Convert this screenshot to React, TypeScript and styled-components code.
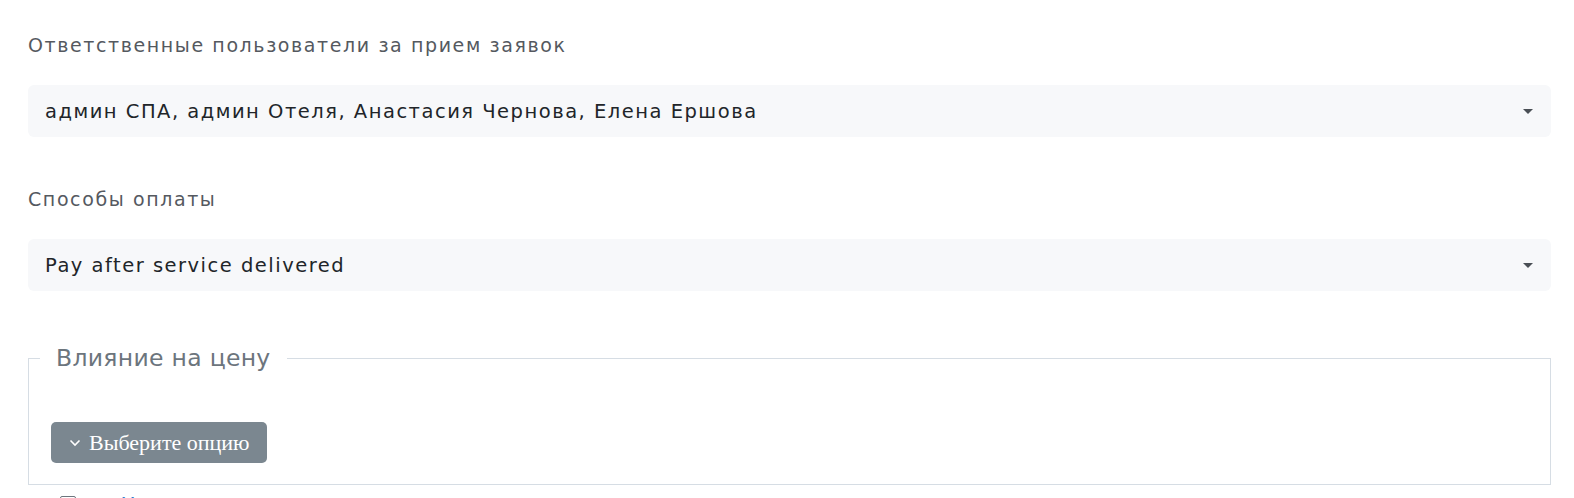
import React from "react";
import styled, { createGlobalStyle } from "styled-components";

const Global = createGlobalStyle`
  html, body { margin: 0; padding: 0; background: #fff; }
  body { font-family: "DejaVu Sans", "Noto Sans", sans-serif; overflow: hidden; }
`;

const Page = styled.div`
  padding: 30px 23px 0 28px;
  display: flex;
  flex-direction: column;
`;

const Group = styled.div<{ $mb: number }>`
  display: flex;
  flex-direction: column;
  gap: 25px;
  margin-bottom: ${(p) => p.$mb}px;
`;

const Label = styled.div`
  font-size: 19px;
  line-height: 30px;
  color: #55595f;
  letter-spacing: 1.6px;
`;

const Select = styled.div`
  height: 52px;
  box-sizing: border-box;
  background: #f7f8fa;
  border-radius: 6px;
  display: flex;
  align-items: center;
  padding: 0 18px 0 17px;
  font-size: 19.5px;
  color: #212529;
  letter-spacing: 1.5px;
`;

const SelectText = styled.span`
  flex: 1;
`;

const Caret = styled.span`
  width: 0;
  height: 0;
  border-left: 5px solid transparent;
  border-right: 5px solid transparent;
  border-top: 5px solid #4a4f55;
`;

const Fieldset = styled.fieldset`
  margin: 3px 0 0;
  border: 1px solid #d6dde4;
  padding: 0 22px 21px;
  min-width: 0;
`;

const Legend = styled.legend`
  margin-left: -11px;
  padding: 0 16px;
  font-size: 23.5px;
  line-height: 36px;
  color: #6c757d;
  letter-spacing: 0.3px;
`;

const OptionButton = styled.button`
  margin-top: 46px;
  height: 41px;
  width: 216px;
  border: none;
  border-radius: 5px;
  background: #7b8790;
  color: #fff;
  font-family: "Liberation Serif", serif;
  font-size: 22px;
  display: flex;
  align-items: center;
  padding: 0 0 0 18px;
  gap: 8px;
`;

const CheckRow = styled.div`
  display: flex;
  align-items: flex-start;
  gap: 46px;
  margin-top: 11px;
  padding-left: 32px;
`;

const Box = styled.span`
  width: 14px;
  height: 14px;
  border: 1px solid #6c757d;
  border-radius: 2px;
  flex: none;
`;

const BlueText = styled.span`
  font-size: 20px;
  line-height: 24px;
  margin-top: -4px;
  color: #2f7fd1;
`;

export default function App() {
  return (
    <>
      <Global />
      <Page>
        <Group $mb={47}>
          <Label>Ответственные пользователи за прием заявок</Label>
          <Select>
            <SelectText>админ СПА, админ Отеля, Анастасия Чернова, Елена Ершова</SelectText>
            <Caret />
          </Select>
        </Group>
        <Group $mb={46}>
          <Label>Способы оплаты</Label>
          <Select>
            <SelectText>Pay after service delivered</SelectText>
            <Caret />
          </Select>
        </Group>
        <Fieldset>
          <Legend>Влияние на цену</Legend>
          <OptionButton>
            <svg width="12" height="8" viewBox="0 0 12 8" fill="none">
              <path d="M1.5 1.5 L6 6 L10.5 1.5" stroke="#fff" strokeWidth="1.6" />
            </svg>
            Выберите опцию
          </OptionButton>
        </Fieldset>
        <CheckRow>
          <Box />
          <BlueText>Учитывать в стоимости</BlueText>
        </CheckRow>
      </Page>
    </>
  );
}
